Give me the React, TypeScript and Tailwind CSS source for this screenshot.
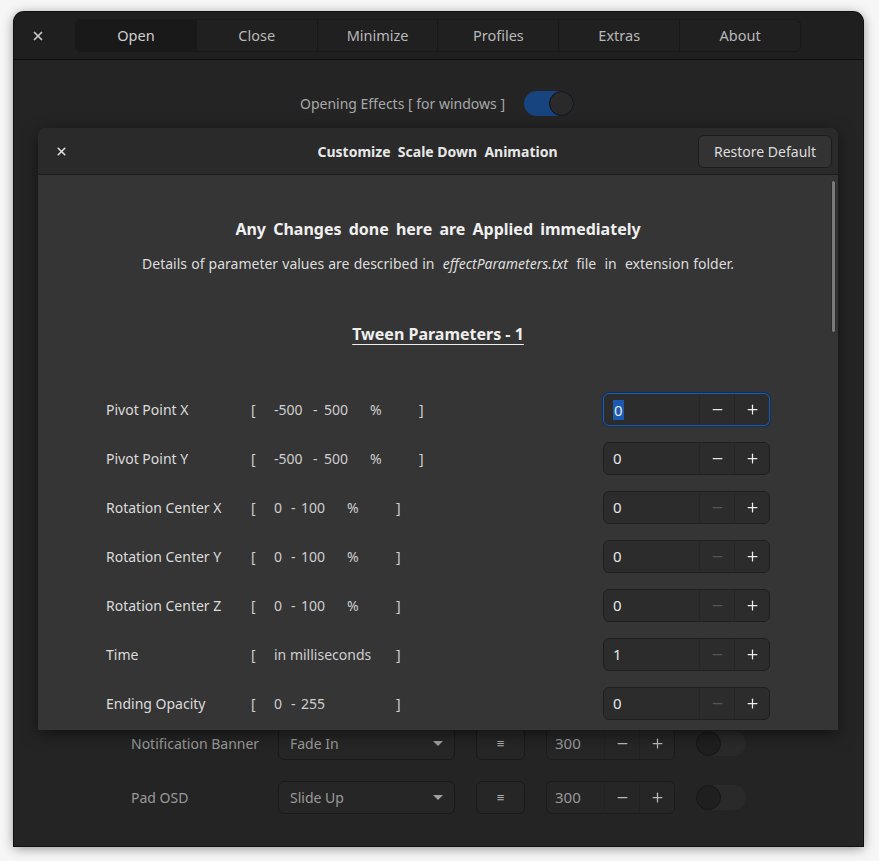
import { Minus, Plus, X } from "lucide-react";

const tabs = ["Open", "Close", "Minimize", "Profiles", "Extras", "About"];

// each range piece: text and the width (full class) of the slot it sits in
const wide = [
  { t: "[", w: "w-[23px]" },
  { t: "-500", w: "w-[39px]" },
  { t: "-", w: "w-[11px]" },
  { t: "500", w: "w-[46px]" },
  { t: "%", w: "w-[49px]" },
  { t: "]", w: "w-[10px]" },
];
const pct = [
  { t: "[", w: "w-[23px]" },
  { t: "0", w: "w-[17px]" },
  { t: "-", w: "w-[10px]" },
  { t: "100", w: "w-[46px]" },
  { t: "%", w: "w-[49px]" },
  { t: "]", w: "w-[10px]" },
];

const params = [
  { label: "Pivot Point X", range: wide, value: "0", minus: true, focus: true },
  { label: "Pivot Point Y", range: wide, value: "0", minus: true },
  { label: "Rotation Center X", range: pct, value: "0" },
  { label: "Rotation Center Y", range: pct, value: "0" },
  { label: "Rotation Center Z", range: pct, value: "0" },
  {
    label: "Time",
    range: [
      { t: "[", w: "w-[23px]" },
      { t: "in milliseconds", w: "w-[122px]" },
      { t: "]", w: "w-[10px]" },
    ],
    value: "1",
  },
  {
    label: "Ending Opacity",
    range: [
      { t: "[", w: "w-[23px]" },
      { t: "0", w: "w-[17px]" },
      { t: "-", w: "w-[10px]" },
      { t: "255", w: "w-[95px]" },
      { t: "]", w: "w-[10px]" },
    ],
    value: "0",
  },
];

function SpinBox({ value, minus, focus }: { value: string; minus?: boolean; focus?: boolean }) {
  return (
    <div
      className={
        "flex h-[33px] w-[167px] rounded-[6px] border bg-[#2c2c2c] " +
        (focus ? "border-[#1e5cab] ring-1 ring-[#10305a]" : "border-[#1f1f1f]")
      }
    >
      <div className="flex flex-1 items-center pl-[9px] text-[15px] text-[#e6e6e6]">
        {focus ? <span className="bg-[#1b5ab0] px-[1px] leading-[20px]">{value}</span> : value}
      </div>
      <div className="flex w-[35px] items-center justify-center border-l border-[#262626]">
        <Minus size={15} strokeWidth={2} className={minus ? "text-[#e6e6e6]" : "text-[#555555]"} />
      </div>
      <div className="flex w-[35px] items-center justify-center border-l border-[#262626]">
        <Plus size={15} strokeWidth={2} className="text-[#eeeeee]" />
      </div>
    </div>
  );
}

function BgRow({ label, effect }: { label: string; effect: string }) {
  return (
    <div className="flex h-[33px] items-center text-[14px] text-[#9a9a9a]">
      <div className="w-[264px] pl-[117px] whitespace-nowrap">{label}</div>
      <div className="flex h-[33px] w-[177px] items-center justify-between rounded-[6px] border border-[#1a1a1a] bg-[#262626] pl-[11px] pr-[11px]">
        <span>{effect}</span>
        <svg width="10" height="6" viewBox="0 0 10 6">
          <path d="M0 0 L10 0 L5 5 Z" fill="#a0a0a0" />
        </svg>
      </div>
      <div className="ml-[21px] flex h-[33px] w-[49px] items-center justify-center rounded-[6px] border border-[#1a1a1a] bg-[#262626] text-[13px] text-[#b0b0b0]">
        ≡
      </div>
      <div className="ml-[21px] flex h-[33px] w-[129px] rounded-[6px] border border-[#1c1c1c] bg-[#262626] text-[15px]">
        <div className="flex flex-1 items-center pl-[8px]">300</div>
        <div className="flex w-[35px] items-center justify-center border-l border-[#222]">
          <Minus size={15} className="text-[#bbbbbb]" />
        </div>
        <div className="flex w-[35px] items-center justify-center border-l border-[#222]">
          <Plus size={15} className="text-[#bbbbbb]" />
        </div>
      </div>
      <div className="ml-[21px] flex h-[25px] w-[50px] items-center rounded-full bg-[#2a2a2a]">
        <div className="h-[25px] w-[25px] rounded-full border border-[#161616] bg-[#1f1f1f]" />
      </div>
    </div>
  );
}

export default function App() {
  return (
    <div className="relative h-[861px] w-[879px] overflow-hidden bg-[#f6f6f6] pl-[14px] pt-[12px] font-['Noto_Sans',sans-serif]">
      <div className="flex h-[834px] w-[849px] flex-col rounded-t-[10px] bg-[#242424] shadow-[0_2px_12px_rgba(0,0,0,0.45)] ring-1 ring-[#111]">
        {/* header bar */}
        <header className="flex h-[48px] items-center rounded-t-[10px] border-b border-[#0e0e0e] bg-[#1f1f1f]">
          <div className="flex w-[47px] items-center justify-center">
            <X size={14} strokeWidth={3} className="text-[#c8c8c8]" />
          </div>
          <div className="ml-[14px] flex h-[33px] w-[726px] overflow-hidden rounded-[6px] border border-[#181818]">
            {tabs.map((t, i) => (
              <div
                key={t}
                className={
                  "flex flex-1 items-center justify-center text-[14.5px] " +
                  (i === 0 ? "bg-[#191919] text-[#cfcfcf]" : "border-l border-[#181818] bg-[#202020] text-[#b8b8b8]")
                }
              >
                {t}
              </div>
            ))}
          </div>
        </header>

        {/* window content */}
        <div className="flex flex-1 flex-col pb-[32px]">
          <div className="mt-[31px] flex items-center justify-center pr-[3px]">
            <span className="text-[14px] text-[#a8a8a8]">Opening Effects [ for windows ]</span>
            <div className="ml-[19px] flex h-[25px] w-[50px] items-center justify-end rounded-full bg-[#17437f]">
              <div className="h-[25px] w-[25px] rounded-full border border-[#111] bg-[#2a2a2a]" />
            </div>
          </div>
          <div className="flex-1" />
          <div className="flex flex-col gap-[21px]">
            <BgRow label="Notification Banner" effect="Fade In" />
            <BgRow label="Pad OSD" effect="Slide Up" />
          </div>
        </div>
      </div>

      {/* customize dialog */}
      <div className="absolute left-[38px] top-[128px] flex h-[602px] w-[800px] flex-col overflow-hidden rounded-t-[8px] bg-[#353535] shadow-[0_4px_16px_rgba(0,0,0,0.5)]">
        <div className="flex h-[47px] shrink-0 items-center border-b border-[#1b1b1b] bg-[#2a2a2a]">
          <div className="flex w-[46px] items-center justify-center">
            <X size={13} strokeWidth={3} className="text-[#e0e0e0]" />
          </div>
          <div className="flex-1 pl-[93px] text-center text-[14px] font-bold text-[#e8e8e8] whitespace-pre">
            {"Customize  Scale Down  Animation"}
          </div>
          <div className="mr-[6px] flex h-[33px] w-[134px] items-center justify-center rounded-[6px] border border-[#1c1c1c] bg-[#333333] text-[14px] text-[#dddddd]">
            Restore Default
          </div>
        </div>
        <div className="relative flex-1">
          <div className="absolute right-[2px] top-[5px] h-[153px] w-[5px] rounded-full border border-[#2a2a2a] bg-[#7a7a7a]" />
          <div className="flex flex-col items-center pt-[42px] text-[#e0e0e0]">
            <div className="text-[16px] font-bold text-[#f0f0f0] [word-spacing:3px]">
              Any Changes done here are Applied immediately
            </div>
            <div className="mt-[12px] whitespace-pre text-[14px] text-[#dddddd] [word-spacing:0.5px]">
              {"Details of parameter values are described in  "}
              <i>effectParameters.txt</i>
              {"  file  in  extension folder."}
            </div>
            <div className="mt-[48px] text-[16px] font-bold text-[#eeeeee] underline underline-offset-[4px]">
              Tween Parameters - 1
            </div>
          </div>
          <div className="mt-[47px] flex flex-col gap-[16px] pl-[68px]">
            {params.map((p) => (
              <div key={p.label} className="flex h-[33px] items-center text-[14px] text-[#dcdcdc]">
                <div className="w-[145px]">{p.label}</div>
                <div className="flex w-[352px] text-[#cfcfcf]">
                  {p.range.map((r, i) => (
                    <span key={i} className={r.w + " shrink-0 whitespace-nowrap"}>
                      {r.t}
                    </span>
                  ))}
                </div>
                <SpinBox value={p.value} minus={p.minus} focus={p.focus} />
              </div>
            ))}
          </div>
        </div>
      </div>
    </div>
  );
}
